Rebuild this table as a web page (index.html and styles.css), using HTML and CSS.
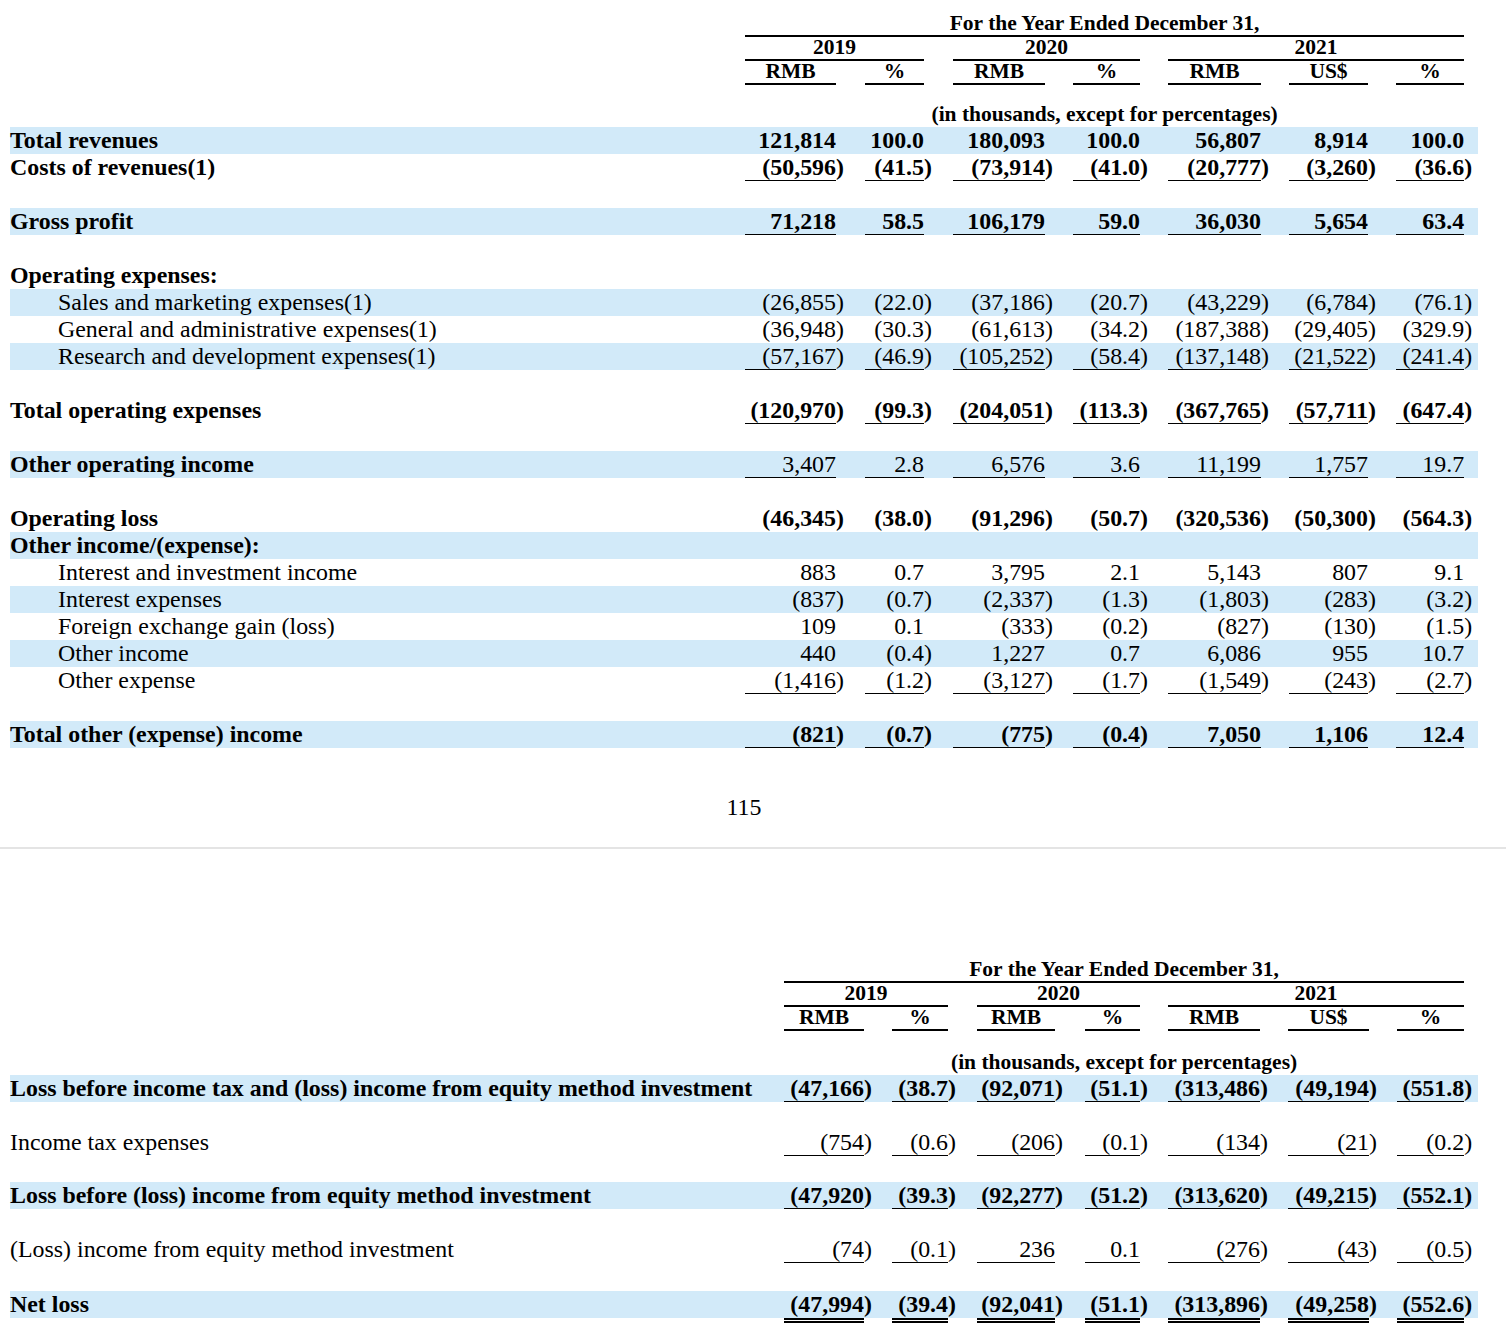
FILE: index.html
```html
<!DOCTYPE html>
<html lang="en">
<head>
<meta charset="utf-8">
<title>Results of Operations</title>
<link rel="stylesheet" href="styles.css">
</head>
<body>
<div class="page">
<table class="fin fin-top">
<colgroup>
<col class="w-label">
<col style="width:91px"><col style="width:29px">
<col style="width:59px"><col style="width:29px">
<col style="width:92px"><col style="width:28px">
<col style="width:67px"><col style="width:28px">
<col style="width:93px"><col style="width:28px">
<col style="width:79px"><col style="width:28px">
<col style="width:68px"><col style="width:14px">
</colgroup>
<thead>
<tr class="h"><td></td><td colspan="13" class="hl">For the Year Ended December 31,</td><td></td></tr>
<tr class="h"><td></td><td colspan="3" class="hl">2019</td><td></td><td colspan="3" class="hl">2020</td><td></td><td colspan="5" class="hl">2021</td><td></td></tr>
<tr class="h"><td></td><td class="hl">RMB</td><td></td><td class="hl">%</td><td></td><td class="hl">RMB</td><td></td><td class="hl">%</td><td></td><td class="hl">RMB</td><td></td><td class="hl">US$</td><td></td><td class="hl">%</td><td></td></tr>
<tr class="unit"><td></td><td colspan="13">(in thousands, except for percentages)</td><td></td></tr>
</thead>
<tbody>
<tr class="band b"><td class="lbl">Total revenues</td><td class="n">121,814</td><td class="p"></td><td class="n">100.0</td><td class="p"></td><td class="n">180,093</td><td class="p"></td><td class="n">100.0</td><td class="p"></td><td class="n">56,807</td><td class="p"></td><td class="n">8,914</td><td class="p"></td><td class="n">100.0</td><td class="p"></td></tr>
<tr class="b ul"><td class="lbl">Costs of revenues(1)</td><td class="n">(50,596</td><td class="p">)</td><td class="n">(41.5</td><td class="p">)</td><td class="n">(73,914</td><td class="p">)</td><td class="n">(41.0</td><td class="p">)</td><td class="n">(20,777</td><td class="p">)</td><td class="n">(3,260</td><td class="p">)</td><td class="n">(36.6</td><td class="p">)</td></tr>
<tr class="blank"><td colspan="15"></td></tr>
<tr class="band b ul"><td class="lbl">Gross profit</td><td class="n">71,218</td><td class="p"></td><td class="n">58.5</td><td class="p"></td><td class="n">106,179</td><td class="p"></td><td class="n">59.0</td><td class="p"></td><td class="n">36,030</td><td class="p"></td><td class="n">5,654</td><td class="p"></td><td class="n">63.4</td><td class="p"></td></tr>
<tr class="blank"><td colspan="15"></td></tr>
<tr><td class="lbl bl">Operating expenses:</td><td colspan="14"></td></tr>
<tr class="band"><td class="lbl ind">Sales and marketing expenses(1)</td><td class="n">(26,855</td><td class="p">)</td><td class="n">(22.0</td><td class="p">)</td><td class="n">(37,186</td><td class="p">)</td><td class="n">(20.7</td><td class="p">)</td><td class="n">(43,229</td><td class="p">)</td><td class="n">(6,784</td><td class="p">)</td><td class="n">(76.1</td><td class="p">)</td></tr>
<tr><td class="lbl ind">General and administrative expenses(1)</td><td class="n">(36,948</td><td class="p">)</td><td class="n">(30.3</td><td class="p">)</td><td class="n">(61,613</td><td class="p">)</td><td class="n">(34.2</td><td class="p">)</td><td class="n">(187,388</td><td class="p">)</td><td class="n">(29,405</td><td class="p">)</td><td class="n">(329.9</td><td class="p">)</td></tr>
<tr class="band ul"><td class="lbl ind">Research and development expenses(1)</td><td class="n">(57,167</td><td class="p">)</td><td class="n">(46.9</td><td class="p">)</td><td class="n">(105,252</td><td class="p">)</td><td class="n">(58.4</td><td class="p">)</td><td class="n">(137,148</td><td class="p">)</td><td class="n">(21,522</td><td class="p">)</td><td class="n">(241.4</td><td class="p">)</td></tr>
<tr class="blank"><td colspan="15"></td></tr>
<tr class="b ul"><td class="lbl">Total operating expenses</td><td class="n">(120,970</td><td class="p">)</td><td class="n">(99.3</td><td class="p">)</td><td class="n">(204,051</td><td class="p">)</td><td class="n">(113.3</td><td class="p">)</td><td class="n">(367,765</td><td class="p">)</td><td class="n">(57,711</td><td class="p">)</td><td class="n">(647.4</td><td class="p">)</td></tr>
<tr class="blank"><td colspan="15"></td></tr>
<tr class="band ul"><td class="lbl bl">Other operating income</td><td class="n">3,407</td><td class="p"></td><td class="n">2.8</td><td class="p"></td><td class="n">6,576</td><td class="p"></td><td class="n">3.6</td><td class="p"></td><td class="n">11,199</td><td class="p"></td><td class="n">1,757</td><td class="p"></td><td class="n">19.7</td><td class="p"></td></tr>
<tr class="blank"><td colspan="15"></td></tr>
<tr class="b"><td class="lbl">Operating loss</td><td class="n">(46,345</td><td class="p">)</td><td class="n">(38.0</td><td class="p">)</td><td class="n">(91,296</td><td class="p">)</td><td class="n">(50.7</td><td class="p">)</td><td class="n">(320,536</td><td class="p">)</td><td class="n">(50,300</td><td class="p">)</td><td class="n">(564.3</td><td class="p">)</td></tr>
<tr class="band"><td class="lbl bl">Other income/(expense):</td><td colspan="14"></td></tr>
<tr><td class="lbl ind">Interest and investment income</td><td class="n">883</td><td class="p"></td><td class="n">0.7</td><td class="p"></td><td class="n">3,795</td><td class="p"></td><td class="n">2.1</td><td class="p"></td><td class="n">5,143</td><td class="p"></td><td class="n">807</td><td class="p"></td><td class="n">9.1</td><td class="p"></td></tr>
<tr class="band"><td class="lbl ind">Interest expenses</td><td class="n">(837</td><td class="p">)</td><td class="n">(0.7</td><td class="p">)</td><td class="n">(2,337</td><td class="p">)</td><td class="n">(1.3</td><td class="p">)</td><td class="n">(1,803</td><td class="p">)</td><td class="n">(283</td><td class="p">)</td><td class="n">(3.2</td><td class="p">)</td></tr>
<tr><td class="lbl ind">Foreign exchange gain (loss)</td><td class="n">109</td><td class="p"></td><td class="n">0.1</td><td class="p"></td><td class="n">(333</td><td class="p">)</td><td class="n">(0.2</td><td class="p">)</td><td class="n">(827</td><td class="p">)</td><td class="n">(130</td><td class="p">)</td><td class="n">(1.5</td><td class="p">)</td></tr>
<tr class="band"><td class="lbl ind">Other income</td><td class="n">440</td><td class="p"></td><td class="n">(0.4</td><td class="p">)</td><td class="n">1,227</td><td class="p"></td><td class="n">0.7</td><td class="p"></td><td class="n">6,086</td><td class="p"></td><td class="n">955</td><td class="p"></td><td class="n">10.7</td><td class="p"></td></tr>
<tr class="ul"><td class="lbl ind">Other expense</td><td class="n">(1,416</td><td class="p">)</td><td class="n">(1.2</td><td class="p">)</td><td class="n">(3,127</td><td class="p">)</td><td class="n">(1.7</td><td class="p">)</td><td class="n">(1,549</td><td class="p">)</td><td class="n">(243</td><td class="p">)</td><td class="n">(2.7</td><td class="p">)</td></tr>
<tr class="blank"><td colspan="15"></td></tr>
<tr class="band b ul"><td class="lbl">Total other (expense) income</td><td class="n">(821</td><td class="p">)</td><td class="n">(0.7</td><td class="p">)</td><td class="n">(775</td><td class="p">)</td><td class="n">(0.4</td><td class="p">)</td><td class="n">7,050</td><td class="p"></td><td class="n">1,106</td><td class="p"></td><td class="n">12.4</td><td class="p"></td></tr>
</tbody>
</table>

<div class="pagenum">115</div>
<hr class="pagebreak">

<table class="fin fin-bottom">
<colgroup>
<col class="w-label2">
<col style="width:80px"><col style="width:28px">
<col style="width:56px"><col style="width:29px">
<col style="width:78px"><col style="width:30px">
<col style="width:55px"><col style="width:28px">
<col style="width:92px"><col style="width:28px">
<col style="width:81px"><col style="width:28px">
<col style="width:67px"><col style="width:14px">
</colgroup>
<thead>
<tr class="h"><td></td><td colspan="13" class="hl">For the Year Ended December 31,</td><td></td></tr>
<tr class="h"><td></td><td colspan="3" class="hl">2019</td><td></td><td colspan="3" class="hl">2020</td><td></td><td colspan="5" class="hl">2021</td><td></td></tr>
<tr class="h"><td></td><td class="hl">RMB</td><td></td><td class="hl">%</td><td></td><td class="hl">RMB</td><td></td><td class="hl">%</td><td></td><td class="hl">RMB</td><td></td><td class="hl">US$</td><td></td><td class="hl">%</td><td></td></tr>
<tr class="unit unit2"><td></td><td colspan="13">(in thousands, except for percentages)</td><td></td></tr>
</thead>
<tbody>
<tr class="band b ul"><td class="lbl">Loss before income tax and (loss) income from equity method investment</td><td class="n">(47,166</td><td class="p">)</td><td class="n">(38.7</td><td class="p">)</td><td class="n">(92,071</td><td class="p">)</td><td class="n">(51.1</td><td class="p">)</td><td class="n">(313,486</td><td class="p">)</td><td class="n">(49,194</td><td class="p">)</td><td class="n">(551.8</td><td class="p">)</td></tr>
<tr class="blank"><td colspan="15"></td></tr>
<tr class="ul"><td class="lbl">Income tax expenses</td><td class="n">(754</td><td class="p">)</td><td class="n">(0.6</td><td class="p">)</td><td class="n">(206</td><td class="p">)</td><td class="n">(0.1</td><td class="p">)</td><td class="n">(134</td><td class="p">)</td><td class="n">(21</td><td class="p">)</td><td class="n">(0.2</td><td class="p">)</td></tr>
<tr class="blank"><td colspan="15"></td></tr>
<tr class="band b ul"><td class="lbl">Loss before (loss) income from equity method investment</td><td class="n">(47,920</td><td class="p">)</td><td class="n">(39.3</td><td class="p">)</td><td class="n">(92,277</td><td class="p">)</td><td class="n">(51.2</td><td class="p">)</td><td class="n">(313,620</td><td class="p">)</td><td class="n">(49,215</td><td class="p">)</td><td class="n">(552.1</td><td class="p">)</td></tr>
<tr class="blank"><td colspan="15"></td></tr>
<tr class="ul"><td class="lbl">(Loss) income from equity method investment</td><td class="n">(74</td><td class="p">)</td><td class="n">(0.1</td><td class="p">)</td><td class="n">236</td><td class="p"></td><td class="n">0.1</td><td class="p"></td><td class="n">(276</td><td class="p">)</td><td class="n">(43</td><td class="p">)</td><td class="n">(0.5</td><td class="p">)</td></tr>
<tr class="blank blank-lg"><td colspan="15"></td></tr>
<tr class="band b dul"><td class="lbl">Net loss</td><td class="n">(47,994</td><td class="p">)</td><td class="n">(39.4</td><td class="p">)</td><td class="n">(92,041</td><td class="p">)</td><td class="n">(51.1</td><td class="p">)</td><td class="n">(313,896</td><td class="p">)</td><td class="n">(49,258</td><td class="p">)</td><td class="n">(552.6</td><td class="p">)</td></tr>
</tbody>
</table>
</div>
</body>
</html>
```

FILE: styles.css
```css
html, body {
  margin: 0;
  padding: 0;
  background: #ffffff;
}

body {
  font-family: "Liberation Serif", "Times New Roman", Times, serif;
  font-size: 23.9px;
  color: #000;
}

.page {
  width: 1468px;
  padding: 13px 0 0 10px;
}

.fin {
  width: 1468px;
  table-layout: fixed;
  border-collapse: separate;
  border-spacing: 0;
}

.w-label { width: 735px; }
.w-label2 { width: 774px; }

.fin td {
  padding: 0;
  white-space: nowrap;
  line-height: 26px;
  border-bottom: 1px solid transparent;
  vertical-align: bottom;
}

/* header rows */
.fin tr.h td {
  font-size: 21.5px;
  line-height: 21px;
  padding-bottom: 1px;
  border-bottom: 2px solid transparent;
  font-weight: bold;
  text-align: center;
}

.fin tr.h td.hl {
  border-bottom-color: #000;
}

.fin tr.unit td {
  font-size: 21.5px;
  font-weight: bold;
  text-align: center;
  line-height: 24px;
  padding-top: 17px;
}

.fin tr.unit2 td {
  padding-top: 19px;
}

.fin tr.band td {
  background: #d2eaf9;
}

.fin tr.b td {
  font-weight: bold;
}

.fin td.bl {
  font-weight: bold;
}

.fin td.lbl {
  text-align: left;
}

.fin td.ind {
  padding-left: 48px;
}

.fin td.n {
  text-align: right;
}

.fin td.p {
  text-align: left;
}

.fin tr.ul td.n {
  border-bottom-color: #000;
}

/* double-underlined grand total: band stops above the rule */
.fin tr.dul td {
  line-height: 27px;
  border-bottom: 5px solid transparent;
  background-clip: padding-box;
}

.fin tr.dul td.n {
  border-bottom: 5px double #000;
}

.fin tr.blank td {
  height: 26px;
}

.fin-bottom tr.blank td {
  height: 25.5px;
}

.fin-bottom tr.blank-lg td {
  height: 27.5px;
}

.pagenum {
  width: 1468px;
  text-align: center;
  line-height: 26px;
  margin-top: 46px;
}

.pagebreak {
  margin: 27px 0 0 -10px;
  width: 1506px;
  border: 0;
  height: 2px;
  background: #e4e4e4;
}

.fin-bottom {
  margin-top: 110px;
}
```
